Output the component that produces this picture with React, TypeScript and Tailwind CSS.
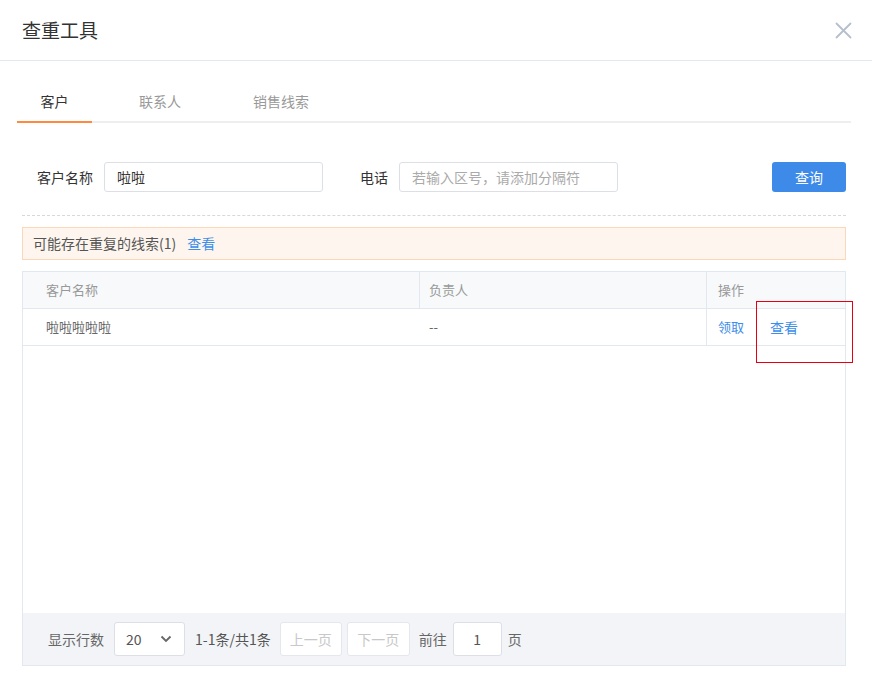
import React from "react";

const font = { fontFamily: '"Noto Sans CJK SC", "Noto Sans", sans-serif' };

export default function App() {
  return (
    <div className="relative w-[872px] h-[684px] bg-white text-[#333]" style={font}>
      {/* Header */}
      <div className="h-[61px] border-b border-[#e4e7ed] flex items-center justify-between pl-[22px] pr-[20px]">
        <div className="text-[19px] text-[#333] leading-none -mt-[2px]">查重工具</div>
        <svg width="17" height="17" viewBox="0 0 17 17" className="mt-[1px]">
          <path d="M1.5 1.5 L15.5 15.5 M15.5 1.5 L1.5 15.5" stroke="#b6bfcc" strokeWidth="1.8" strokeLinecap="round" />
        </svg>
      </div>

      {/* Tabs */}
      <div className="ml-[17px] mr-[21px] mt-[30px] flex border-b-2 border-[#eeeeee] text-[14px] leading-[20px]">
        <div className="w-[75px] text-center pb-[10px] -mb-[2px] border-b-2 border-[#ff8a3d] text-[#333]">客户</div>
        <div className="ml-[47px] pb-[10px] text-[#999]">联系人</div>
        <div className="ml-[72px] pb-[10px] text-[#999]">销售线索</div>
      </div>

      <div className="ml-[22px] mr-[26px]">
        {/* Form */}
        <div className="mt-[39px] flex items-center h-[30px] text-[14px]">
          <div className="ml-[15px] w-[67px] text-[#333]">客户名称</div>
          <div className="w-[219px] h-[30px] border border-[#dcdfe6] rounded-[3px] flex items-center px-[12px] text-[#333]">啦啦</div>
          <div className="ml-[37px] w-[39px] text-[#333]">电话</div>
          <div className="w-[219px] h-[30px] border border-[#dcdfe6] rounded-[3px] flex items-center px-[12px] text-[#aaa]">若输入区号，请添加分隔符</div>
          <div className="ml-auto w-[74px] h-[30px] rounded-[3px] bg-[#3d8ae8] text-white flex items-center justify-center">查询</div>
        </div>

        {/* Dashed line */}
        <div className="mt-[23px] border-t border-dashed border-[#d8d8d8]" />

        {/* Alert */}
        <div className="mt-[11px] h-[33px] bg-[#fdf5ee] border border-[#fcd8b9] flex items-center pl-[10px] text-[14px]">
          <span className="text-[#555]">可能存在重复的线索(1)</span>
          <span className="ml-[11px] text-[#3c8ee8]">查看</span>
        </div>

        {/* Table */}
        <div className="mt-[11px] h-[395px] border border-[#e1e8f0] flex flex-col text-[13px]">
          <div className="h-[37px] bg-[#f7f9fb] flex border-b border-[#e1e8f0] text-[#999]">
            <div className="w-[397px] border-r border-[#e1e8f0] flex items-center pl-[23px]">客户名称</div>
            <div className="w-[287px] border-r border-[#e1e8f0] flex items-center pl-[9px]">负责人</div>
            <div className="flex-1 flex items-center pl-[11px]">操作</div>
          </div>
          <div className="h-[37px] flex border-b border-[#e1e8f0] text-[#666]">
            <div className="w-[397px] flex items-center pl-[23px]">啦啦啦啦啦</div>
            <div className="w-[287px] border-r border-[#e1e8f0] flex items-center pl-[9px]">--</div>
            <div className="flex-1 flex items-center pl-[11px] text-[#3c8ee8]">
              <span>领取</span>
              <span className="ml-[26px] text-[14px]">查看</span>
            </div>
          </div>
          <div className="flex-1" />
          <div className="h-[52px] bg-[#f2f4f7] flex items-center text-[14px]">
            <span className="ml-[25px] text-[#666]">显示行数</span>
            <div className="ml-[10px] w-[71px] h-[34px] bg-white border border-[#dcdfe6] rounded-[3px] flex items-center justify-between pl-[11px] pr-[12px] text-[#555]">
              <span>20</span>
              <svg width="12" height="8" viewBox="0 0 12 8">
                <path d="M1.5 1.5 L6 6 L10.5 1.5" fill="none" stroke="#666" strokeWidth="1.8" />
              </svg>
            </div>
            <span className="ml-[10px] text-[#555]">1-1条/共1条</span>
            <div className="ml-[9px] w-[62px] h-[34px] bg-white border border-[#e4e7ed] rounded-[3px] flex items-center justify-center text-[#c8c8c8]">上一页</div>
            <div className="ml-[5px] w-[63px] h-[34px] bg-white border border-[#e4e7ed] rounded-[3px] flex items-center justify-center text-[#c8c8c8]">下一页</div>
            <span className="ml-[9px] text-[#666]">前往</span>
            <div className="ml-[6px] w-[49px] h-[34px] bg-white border border-[#dcdfe6] rounded-[3px] flex items-center justify-center text-[#555]">1</div>
            <span className="ml-[6px] text-[#666]">页</span>
          </div>
        </div>
      </div>

      {/* Red highlight box */}
      <div className="absolute left-[756px] top-[301px] w-[97px] h-[62px] border-[1.5px] border-[#e60012]" />
    </div>
  );
}
